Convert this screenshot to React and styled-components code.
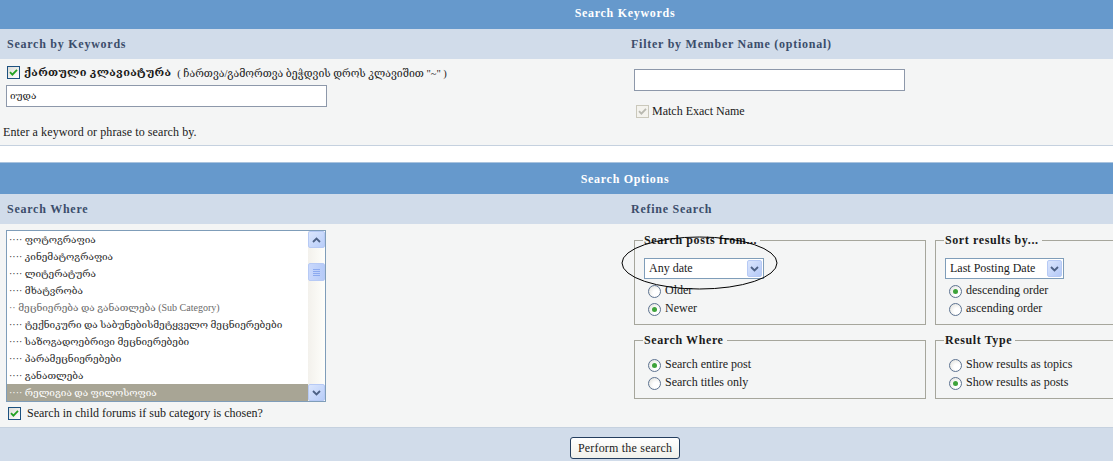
import React from "react";
import styled, { createGlobalStyle } from "styled-components";

const GlobalStyle = createGlobalStyle`
  html, body {
    margin: 0;
    padding: 0;
    overflow: hidden;
    background: #ffffff;
  }
  body {
    font-family: "Liberation Serif", "DejaVu Serif", serif;
    font-size: 12px;
    color: #1a1a1a;
  }
`;

const forums = [
  { name: "···· ფოტოგრაფია" },
  { name: "···· კინემატოგრაფია" },
  { name: "···· ლიტერატურა" },
  { name: "···· მხატვრობა" },
  { name: "·· მეცნიერება და განათლება (Sub Category)", sub: true },
  { name: "···· ტექნიკური და საბუნებისმეტყველო მეცნიერებები" },
  { name: "···· საზოგადოებრივი მეცნიერებები" },
  { name: "···· პარამეცნიერებები" },
  { name: "···· განათლება" },
  { name: "···· რელიგია და ფილოსოფია", selected: true },
];

function CheckBox({ disabled }) {
  return (
    <Check $disabled={disabled}>
      <svg width="9" height="9" viewBox="0 0 9 9">
        <path
          d="M1 4.2 L3.4 6.6 L8 1.8"
          fill="none"
          stroke={disabled ? "#b8b8b0" : "#21a121"}
          strokeWidth="1.8"
        />
      </svg>
    </Check>
  );
}

function Radio({ checked, label }) {
  return (
    <RadioRow>
      <RadioDot $checked={checked} />
      <span>{label}</span>
    </RadioRow>
  );
}

function Chevron({ up }) {
  return (
    <svg width="9" height="6" viewBox="0 0 9 6">
      <path
        d={up ? "M1 5 L4.5 1.5 L8 5" : "M1 1 L4.5 4.5 L8 1"}
        fill="none"
        stroke="#4d6185"
        strokeWidth="1.8"
      />
    </svg>
  );
}

function Select({ value, width }) {
  return (
    <SelectBox $width={width}>
      <span>{value}</span>
      <ArrowBtn>
        <Chevron />
      </ArrowBtn>
    </SelectBox>
  );
}

export default function App() {
  return (
    <>
      <GlobalStyle />
      <Viewport>
        <Sheet>
          <TitleBar $first>Search Keywords</TitleBar>
          <Columns>
            <SubHead>Search by Keywords</SubHead>
            <SubHead>Filter by Member Name (optional)</SubHead>
          </Columns>
          <Columns $body $height={86}>
            <Cell>
              <KeyboardRow>
                <CheckBox />
                <b>ქართული კლავიატურა</b>
                <Small>( ჩართვა/გამორთვა ბეჭდვის დროს კლავიშით "~" )</Small>
              </KeyboardRow>
              <TextInput $width={321} $top={5}>იუდა</TextInput>
              <Hint>Enter a keyword or phrase to search by.</Hint>
            </Cell>
            <Cell $right>
              <TextInput $width={271} $top={10} />
              <CheckRow $top={13} $left={2} $gap={3}>
                <CheckBox disabled />
                <span>Match Exact Name</span>
              </CheckRow>
            </Cell>
          </Columns>

          <Gap />

          <TitleBar>Search Options</TitleBar>
          <Columns>
            <SubHead>Search Where</SubHead>
            <SubHead>Refine Search</SubHead>
          </Columns>
          <Columns $body $height={203}>
            <Cell>
              <ListBox>
                <ListItems>
                  {forums.map((f) => (
                    <ListItem key={f.name} $sub={f.sub} $selected={f.selected}>
                      {f.name}
                    </ListItem>
                  ))}
                </ListItems>
                <ScrollBar>
                  <ScrollBtn>
                    <Chevron up />
                  </ScrollBtn>
                  <Thumb>
                    <Grip />
                    <Grip />
                    <Grip />
                    <Grip />
                  </Thumb>
                  <Track />
                  <ScrollBtn>
                    <Chevron />
                  </ScrollBtn>
                </ScrollBar>
              </ListBox>
              <CheckRow $top={4} $left={2} $gap={6}>
                <CheckBox />
                <span>Search in child forums if sub category is chosen?</span>
              </CheckRow>
            </Cell>
            <Cell $right>
              <FieldGrid>
                <FieldSet $height={92}>
                  <Legend>Search posts from...</Legend>
                  <Select value="Any date" width={120} />
                  <RadioList $top={2}>
                    <Radio label="Older" />
                    <Radio label="Newer" checked />
                  </RadioList>
                </FieldSet>
                <FieldSet $height={92}>
                  <Legend>Sort results by...</Legend>
                  <Select value="Last Posting Date" width={119} />
                  <RadioList $top={2}>
                    <Radio label="descending order" checked />
                    <Radio label="ascending order" />
                  </RadioList>
                </FieldSet>
                <FieldSet $height={66}>
                  <Legend>Search Where</Legend>
                  <RadioList $top={8}>
                    <Radio label="Search entire post" checked />
                    <Radio label="Search titles only" />
                  </RadioList>
                </FieldSet>
                <FieldSet $height={66}>
                  <Legend>Result Type</Legend>
                  <RadioList $top={8}>
                    <Radio label="Show results as topics" />
                    <Radio label="Show results as posts" checked />
                  </RadioList>
                </FieldSet>
              </FieldGrid>
              <Ellipse width="157" height="54" viewBox="0 0 157 54">
                <ellipse cx="78.5" cy="27" rx="77.5" ry="26" fill="none" stroke="#000" strokeWidth="1" />
              </Ellipse>
            </Cell>
          </Columns>
          <Footer>
            <Button>Perform the search</Button>
          </Footer>
        </Sheet>
      </Viewport>
    </>
  );
}

const Viewport = styled.div`
  width: 100vw;
  overflow: hidden;
`;

const Sheet = styled.div`
  width: 1250px;
`;

const TitleBar = styled.div`
  height: ${(p) => (p.$first ? "29px" : "32px")};
  line-height: ${(p) => (p.$first ? "27px" : "32px")};
  background: #6699cc;
  border-top: ${(p) => (p.$first ? "none" : "1px solid #a9c3de")};
  color: #ffffff;
  font-weight: bold;
  font-size: 12px;
  letter-spacing: 0.7px;
  text-align: center;
  box-sizing: border-box;
`;

const Columns = styled.div`
  display: grid;
  grid-template-columns: 625px 625px;
  background: ${(p) => (p.$body ? "#f4f5f5" : "#d1dcea")};
  height: ${(p) => (p.$height ? p.$height + "px" : "30px")};
  border-bottom: ${(p) => (p.$body ? "1px solid #c5d1df" : "none")};
`;

const SubHead = styled.div`
  padding-left: 7px;
  line-height: 30px;
  font-weight: bold;
  font-size: 12px;
  letter-spacing: 0.75px;
  color: #3b4d6b;
  &:nth-child(2) {
    padding-left: 6px;
  }
`;

const Cell = styled.div`
  position: relative;
  padding: ${(p) => (p.$right ? "0 0 0 9px" : "6px 0 0 6px")};
  display: flex;
  flex-direction: column;
  align-items: flex-start;
`;

const KeyboardRow = styled.div`
  display: flex;
  align-items: center;
  gap: 4px;
  height: 15px;
  margin-left: 1px;
  b {
    font-size: 11px;
    letter-spacing: 0.3px;
  }
`;

const Small = styled.span`
  font-size: 10.5px;
  margin-left: 2px;
  color: #222;
`;

const TextInput = styled.div`
  width: ${(p) => p.$width}px;
  height: 22px;
  box-sizing: border-box;
  margin-top: ${(p) => p.$top}px;
  border: 1px solid #8d98aa;
  background: #ffffff;
  padding: 0 3px;
  line-height: 20px;
  font-size: 10px;
`;

const Hint = styled.div`
  margin: 18px 0 0 -3px;
  line-height: 14px;
  letter-spacing: 0.1px;
`;

const Gap = styled.div`
  height: 16px;
  background: #ffffff;
`;

const Check = styled.span`
  width: 13px;
  height: 13px;
  box-sizing: border-box;
  border: 1px solid ${(p) => (p.$disabled ? "#cac8bb" : "#1c5180")};
  background: ${(p) =>
    p.$disabled ? "#f4f3ee" : "linear-gradient(135deg, #dcdcd7, #ffffff)"};
  display: inline-flex;
  align-items: center;
  justify-content: center;
  flex: none;
`;

const CheckRow = styled.div`
  display: flex;
  align-items: center;
  gap: ${(p) => p.$gap}px;
  height: 14px;
  margin-top: ${(p) => p.$top}px;
  margin-left: ${(p) => p.$left}px;
  color: #1a1a1a;
`;

const ListBox = styled.div`
  width: 320px;
  height: 172px;
  box-sizing: border-box;
  border: 1px solid #7f9db9;
  background: #ffffff;
  display: flex;
`;

const ListItems = styled.div`
  flex: 1;
  display: flex;
  flex-direction: column;
`;

const ListItem = styled.div`
  height: 17px;
  line-height: 17px;
  padding-left: 2px;
  white-space: nowrap;
  overflow: hidden;
  font-size: 10px;
  color: ${(p) => (p.$selected ? "#ffffff" : p.$sub ? "#6a6a6a" : "#2a2a2a")};
  background: ${(p) => (p.$selected ? "#a8a595" : "transparent")};
`;

const ScrollBar = styled.div`
  width: 17px;
  display: flex;
  flex-direction: column;
  background: linear-gradient(90deg, #f3f1ec, #fefefb);
`;

const ScrollBtn = styled.div`
  height: 17px;
  box-sizing: border-box;
  border: 1px solid #b7caf5;
  border-radius: 2px;
  background: linear-gradient(135deg, #dbe6fd, #b8cdf9);
  display: flex;
  align-items: center;
  justify-content: center;
`;

const Thumb = styled.div`
  margin-top: 15px;
  height: 18px;
  box-sizing: border-box;
  border: 1px solid #b7caf5;
  border-radius: 2px;
  background: linear-gradient(90deg, #c9d8fc, #b6cbf8);
  display: flex;
  flex-direction: column;
  align-items: center;
  justify-content: center;
  gap: 1px;
`;

const Grip = styled.span`
  width: 7px;
  height: 1px;
  background: #8caaf0;
`;

const Track = styled.div`
  flex: 1;
`;

const FieldGrid = styled.div`
  display: grid;
  grid-template-columns: 292px 292px;
  column-gap: 9px;
  row-gap: 8px;
  margin-top: 9px;
`;

const FieldSet = styled.fieldset`
  margin: 0;
  padding: 0 9px;
  height: ${(p) => p.$height}px;
  box-sizing: border-box;
  border: 1px solid #a6a69c;
  border-radius: 0;
  display: flex;
  flex-direction: column;
  align-items: flex-start;
`;

const Legend = styled.legend`
  padding: 0 3px 0 1px;
  margin-left: -1px;
  line-height: 14px;
  font-weight: bold;
  font-size: 12px;
  letter-spacing: 0.6px;
  color: #1a1a1a;
`;

const SelectBox = styled.div`
  width: ${(p) => p.$width}px;
  height: 21px;
  box-sizing: border-box;
  margin-top: 11px;
  border: 1px solid #7f9db9;
  background: #ffffff;
  display: flex;
  align-items: center;
  justify-content: space-between;
  padding: 0 1px 0 4px;
`;

const ArrowBtn = styled.div`
  width: 15px;
  height: 17px;
  box-sizing: border-box;
  border: 1px solid #b7caf5;
  border-radius: 2px;
  background: linear-gradient(135deg, #dbe6fd, #b4c9f7);
  display: flex;
  align-items: center;
  justify-content: center;
`;

const RadioList = styled.div`
  display: flex;
  flex-direction: column;
  margin-top: ${(p) => p.$top}px;
  margin-left: 4px;
`;

const RadioRow = styled.div`
  display: flex;
  align-items: center;
  gap: 4px;
  height: 18px;
`;

const RadioDot = styled.span`
  width: 13px;
  height: 13px;
  box-sizing: border-box;
  border-radius: 50%;
  border: 1px solid #5d7391;
  background: radial-gradient(circle at 65% 65%, #ffffff 30%, #dcdcd6 100%);
  display: inline-flex;
  align-items: center;
  justify-content: center;
  margin-top: 3px;
  flex: none;
  &::after {
    content: "";
    width: 5px;
    height: 5px;
    border-radius: 50%;
    background: ${(p) => (p.$checked ? "#3ea33a" : "transparent")};
  }
`;

const Ellipse = styled.svg`
  position: absolute;
  left: -4px;
  top: 12px;
  pointer-events: none;
`;

const Footer = styled.div`
  height: 34px;
  background: #d1dcea;
  display: flex;
  justify-content: center;
  padding-top: 9px;
  box-sizing: border-box;
`;

const Button = styled.button`
  height: 22px;
  padding: 0 7px;
  font-family: "Liberation Serif", "DejaVu Serif", serif;
  font-size: 12px;
  letter-spacing: 0.2px;
  color: #1a1a1a;
  background: linear-gradient(180deg, #ffffff, #f0f0ea);
  border: 1px solid #243e5e;
  border-radius: 3px;
`;
